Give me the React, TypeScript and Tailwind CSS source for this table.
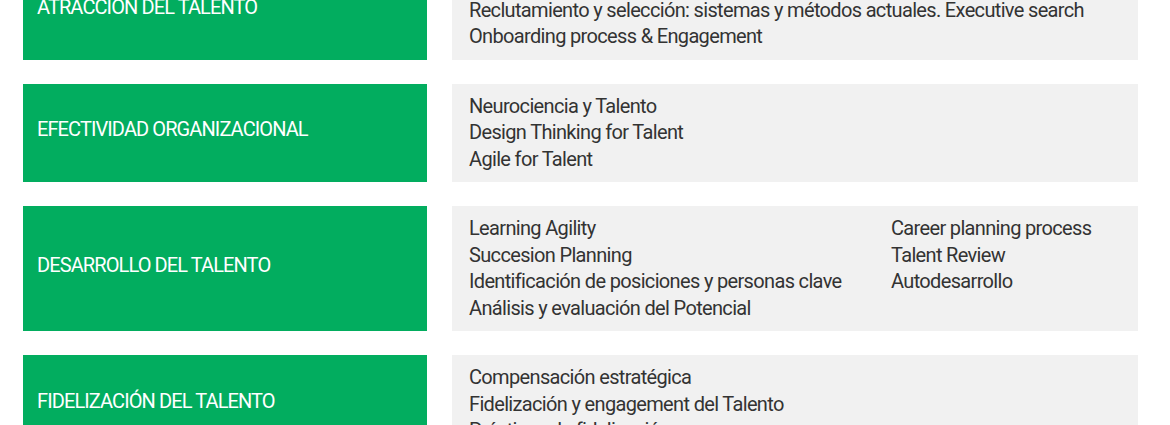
import React from 'react'

type Area = {
  title: string
  columns: string[][]
}

const areas: Area[] = [
  {
    title: 'ATRACCION DEL TALENTO',
    columns: [
      [
        'Employer Branding',
        'Reclutamiento y selección: sistemas y métodos actuales. Executive search',
        'Onboarding process & Engagement',
      ],
    ],
  },
  {
    title: 'EFECTIVIDAD ORGANIZACIONAL',
    columns: [['Neurociencia y Talento', 'Design Thinking for Talent', 'Agile for Talent']],
  },
  {
    title: 'DESARROLLO DEL TALENTO',
    columns: [
      [
        'Learning Agility',
        'Succesion Planning',
        'Identificación de posiciones y personas clave',
        'Análisis y evaluación del Potencial',
      ],
      ['Career planning process', 'Talent Review', 'Autodesarrollo'],
    ],
  },
  {
    title: 'FIDELIZACIÓN DEL TALENTO',
    columns: [
      [
        'Compensación estratégica',
        'Fidelización y engagement del Talento',
        'Prácticas de fidelización',
      ],
    ],
  },
]

const AreaRow: React.FC<{ area: Area }> = ({ area }) => {
  return (
    <div className="flex gap-[25px]">
      <div className="w-[404px] shrink-0 flex items-center bg-[#02ad5f] pl-[14px] pb-[7px]">
        <h2 className="text-[20px] font-normal tracking-[-0.9px] text-white">{area.title}</h2>
      </div>
      <div className="flex-1 flex bg-[#f1f1f1] px-[17px] pt-[9px] pb-[10px]">
        {area.columns.map((col, i) => (
          <ul key={i} className={i === 0 && area.columns.length > 1 ? 'w-[422px]' : ''}>
            {col.map((item) => (
              <li key={item} className="text-[20px] leading-[26.5px] tracking-[-0.66px] text-[#333]">
                {item}
              </li>
            ))}
          </ul>
        ))}
      </div>
    </div>
  )
}

export default function App() {
  return (
    <div
      className="bg-white w-[1170px] h-[425px] overflow-hidden"
      style={{ fontFamily: 'Roboto, "Noto Sans", sans-serif' }}
    >
      <div className="-mt-[39px] pl-[23px] pr-[32px] flex flex-col gap-[24px]">
        {areas.map((area) => (
          <AreaRow key={area.title} area={area} />
        ))}
      </div>
    </div>
  )
}
